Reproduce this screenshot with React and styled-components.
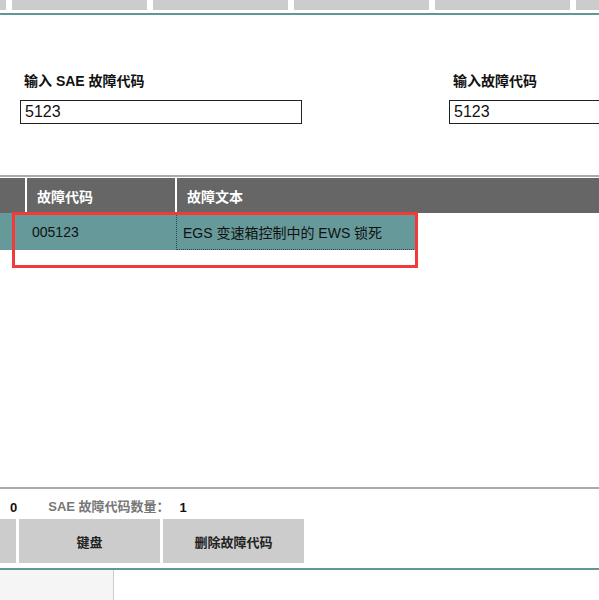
import styled, { createGlobalStyle } from "styled-components";

const Global = createGlobalStyle`
  html, body { margin: 0; padding: 0; background: #fff; }
  body {
    font-family: "Liberation Sans", Arial, "Noto Sans CJK SC", sans-serif;
    color: #111;
    overflow: hidden;
  }
`;

const Page = styled.div`
  width: 599px;
  height: 600px;
  display: flex;
  flex-direction: column;
  overflow: hidden;
`;

const TabBar = styled.div`
  display: flex;
  gap: 6px;
  margin-left: -129px;
  height: 10px;
  flex-shrink: 0;
`;

const Tab = styled.div`
  flex: 0 0 135px;
  height: 10px;
  background: #cccccc;
`;

const TealRule = styled.div`
  height: 2px;
  background: #5f9995;
  margin-top: ${(p) => p.$top || 0}px;
  flex-shrink: 0;
`;

const Form = styled.div`
  height: 160px;
  flex-shrink: 0;
  display: grid;
  grid-template-columns: 282px 282px;
  column-gap: 147px;
  padding: 58px 0 0 20px;
  box-sizing: border-box;
`;

const Field = styled.div`
  display: flex;
  flex-direction: column;
`;

const Label = styled.label`
  font-size: 14px;
  font-weight: bold;
  padding-left: 4px;
  height: 16px;
  line-height: 16px;
  margin-bottom: 11px;
`;

const Input = styled.input`
  width: 282px;
  height: 24px;
  box-sizing: border-box;
  border: 1px solid #222;
  padding: 0 4px;
  font-family: inherit;
  font-size: 16px;
  color: #111;
  outline: none;
`;

const GrayRule = styled.div`
  height: 2px;
  background: #aaaaaa;
  flex-shrink: 0;
`;

const Table = styled.div`
  position: relative;
  margin-top: 1px;
  height: 309px;
  flex-shrink: 0;
`;

const HeadRow = styled.div`
  display: flex;
  height: 35px;
  background: #666666;
`;

const HeadCell = styled.div`
  width: ${(p) => p.$w}px;
  flex: ${(p) => (p.$w ? "none" : 1)};
  border-right: ${(p) => (p.$w ? "2px solid #fff" : "none")};
  color: #fff;
  font-size: 14px;
  font-weight: bold;
  padding-left: 10px;
  box-sizing: border-box;
  display: flex;
  align-items: center;
`;

const DataRow = styled.div`
  display: flex;
  width: 416px;
  height: 37px;
  background: #669999;
`;

const Cell = styled.div`
  width: ${(p) => p.$w}px;
  flex: ${(p) => (p.$w ? "none" : 1)};
  box-sizing: border-box;
  padding-left: ${(p) => p.$pad}px;
  font-size: 14px;
  color: #111;
  display: flex;
  align-items: center;
  border: ${(p) => (p.$focus ? "1px dotted #2a4a4a" : "none")};
`;

const Marker = styled.div`
  position: absolute;
  left: 12px;
  top: 34px;
  width: 406px;
  height: 56px;
  border: 3px solid #f23a3a;
  box-sizing: border-box;
`;

const Status = styled.div`
  height: 30px;
  flex-shrink: 0;
  display: flex;
  align-items: flex-end;
  padding-bottom: 4px;
  box-sizing: border-box;
  font-size: 13px;
  font-weight: bold;
`;

const StatItem = styled.span`
  color: ${(p) => (p.$muted ? "#777" : "#111")};
  margin-left: ${(p) => p.$ml || 0}px;
`;

const ButtonRow = styled.div`
  display: flex;
  gap: 3px;
  height: 44px;
  flex-shrink: 0;
  margin-left: -125px;
`;

const Button = styled.button`
  flex: 0 0 141px;
  height: 44px;
  border: none;
  background: #cccccc;
  font-family: inherit;
  font-size: 13px;
  font-weight: bold;
  color: #222;
  padding: 0;
`;

const Footer = styled.div`
  flex: 1;
  display: flex;
`;

const FooterPane = styled.div`
  width: 113px;
  background: #f5f5f5;
  border-right: 1px solid #cccccc;
`;

export default function App() {
  return (
    <Page>
      <Global />
      <TabBar>
        <Tab />
        <Tab />
        <Tab />
        <Tab />
        <Tab />
        <Tab />
      </TabBar>
      <TealRule $top={3} />
      <Form>
        <Field>
          <Label>输入 SAE 故障代码</Label>
          <Input defaultValue="5123" />
        </Field>
        <Field>
          <Label>输入故障代码</Label>
          <Input defaultValue="5123" />
        </Field>
      </Form>
      <GrayRule />
      <Table>
        <HeadRow>
          <HeadCell $w={27} />
          <HeadCell $w={150}>故障代码</HeadCell>
          <HeadCell>故障文本</HeadCell>
        </HeadRow>
        <DataRow>
          <Cell $w={176} $pad={32}>005123</Cell>
          <Cell $pad={6} $focus>EGS 变速箱控制中的 EWS 锁死</Cell>
        </DataRow>
        <Marker />
      </Table>
      <GrayRule />
      <Status>
        <StatItem $ml={10}>0</StatItem>
        <StatItem $ml={31} $muted>SAE 故障代码数量：</StatItem>
        <StatItem $ml={10}>1</StatItem>
      </Status>
      <ButtonRow>
        <Button />
        <Button>键盘</Button>
        <Button>删除故障代码</Button>
      </ButtonRow>
      <TealRule $top={5} />
      <Footer>
        <FooterPane />
      </Footer>
    </Page>
  );
}
